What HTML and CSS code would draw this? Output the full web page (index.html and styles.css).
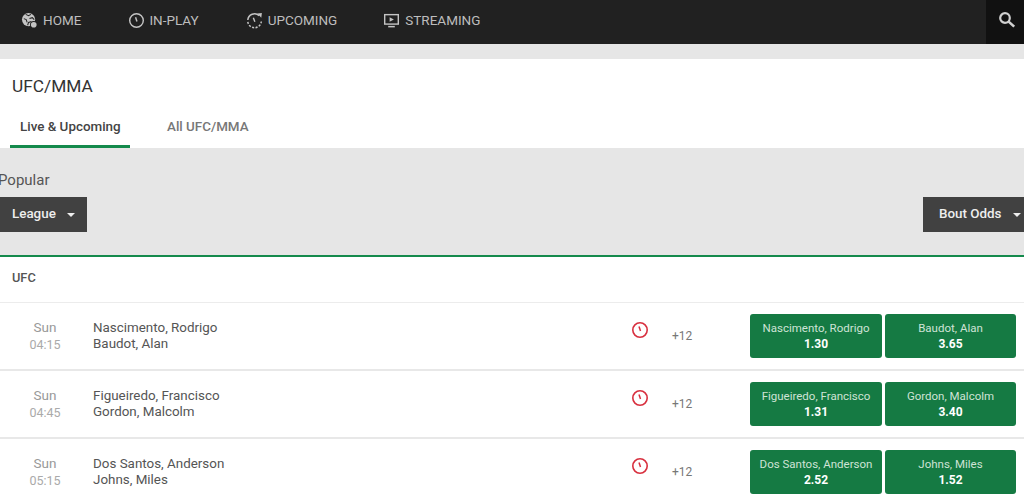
FILE: index.html
```html
<!DOCTYPE html>
<html lang="en">
<head>
<meta charset="utf-8">
<title>UFC/MMA</title>
<link rel="stylesheet" href="styles.css">
</head>
<body>
<header class="topbar">
  <nav class="nav">
    <a class="nav-item nav-home">
      <svg class="nav-icon" viewBox="0 0 18 18"><circle cx="8" cy="8" r="7" fill="#c4c4c4"/><path d="M5 2.5l3 1.5 2.5-1.5M3 7l2.5 1 1 3M9 7l3-1 2 2M7 14l1-3 3-1" stroke="#222" stroke-width="1.1" fill="none"/><circle cx="13.5" cy="13.5" r="4" fill="#222"/><circle cx="13.5" cy="13.5" r="3" fill="#c4c4c4"/></svg>
      HOME
    </a>
    <a class="nav-item nav-play">
      <svg class="nav-icon" viewBox="0 0 18 18"><circle cx="9" cy="9" r="7.2" fill="none" stroke="#c4c4c4" stroke-width="1.5"/><path d="M8 5.5l1.5 4.5" stroke="#c4c4c4" stroke-width="1.5" fill="none"/></svg>
      IN-PLAY
    </a>
    <a class="nav-item nav-up">
      <svg class="nav-icon" viewBox="0 0 18 18"><path d="M1.9 8.5A7.2 7.2 0 0 1 14 3.8" fill="none" stroke="#c4c4c4" stroke-width="1.6"/><path d="M1.9 10.5A7.2 7.2 0 0 0 16.2 10" fill="none" stroke="#c4c4c4" stroke-width="1.6" stroke-dasharray="2.2 1.5"/><path d="M12 1.5l4.8-.5-.6 5z" fill="#c4c4c4"/><path d="M7.8 6l1.6 4.2" stroke="#c4c4c4" stroke-width="1.5" fill="none"/></svg>
      UPCOMING
    </a>
    <a class="nav-item">
      <svg class="nav-icon" viewBox="0 0 18 18"><rect x="1.8" y="2.8" width="14.4" height="10" fill="none" stroke="#c4c4c4" stroke-width="1.5"/><path d="M7 5.5l4.5 2.4L7 10.3z" fill="#c4c4c4"/><path d="M5.5 15.5h7" stroke="#c4c4c4" stroke-width="1.6"/></svg>
      STREAMING
    </a>
  </nav>
  <button class="search" aria-label="Search">
    <svg viewBox="0 0 18 18" width="18" height="18"><circle cx="7" cy="7" r="4.8" fill="none" stroke="#d0d0d0" stroke-width="2.2"/><path d="M10.6 10.6l5.6 5" stroke="#d0d0d0" stroke-width="2.6"/></svg>
  </button>
</header>
<div class="strip"></div>
<section class="head">
  <h1 class="title">UFC/MMA</h1>
  <div class="tabs">
    <a class="tab tab-active">Live &amp; Upcoming</a>
    <a class="tab">All UFC/MMA</a>
  </div>
</section>
<section class="filters">
  <div class="filters-label">Popular</div>
  <div class="filters-row">
    <button class="drop drop-league">League<span class="caret"></span></button>
    <button class="drop drop-odds">Bout Odds<span class="caret"></span></button>
  </div>
</section>
<section class="league">UFC</section>
<main>
  <article class="bout">
    <div class="when"><div class="day">Sun</div><div class="time">04:15</div></div>
    <div class="names"><div>Nascimento, Rodrigo</div><div>Baudot, Alan</div></div>
    <svg class="clock" viewBox="0 0 18 18"><circle cx="9" cy="9" r="7.2" fill="none" stroke="#d8303f" stroke-width="1.6"/><path d="M8 5.5l1.5 4.5" stroke="#d8303f" stroke-width="1.5" fill="none"/></svg>
    <div class="more">+12</div>
    <div class="odds">
      <a class="odd odd-l"><span>Nascimento, Rodrigo</span><b>1.30</b></a>
      <a class="odd odd-r"><span>Baudot, Alan</span><b>3.65</b></a>
    </div>
  </article>
  <article class="bout">
    <div class="when"><div class="day">Sun</div><div class="time">04:45</div></div>
    <div class="names"><div>Figueiredo, Francisco</div><div>Gordon, Malcolm</div></div>
    <svg class="clock" viewBox="0 0 18 18"><circle cx="9" cy="9" r="7.2" fill="none" stroke="#d8303f" stroke-width="1.6"/><path d="M8 5.5l1.5 4.5" stroke="#d8303f" stroke-width="1.5" fill="none"/></svg>
    <div class="more">+12</div>
    <div class="odds">
      <a class="odd odd-l"><span>Figueiredo, Francisco</span><b>1.31</b></a>
      <a class="odd odd-r"><span>Gordon, Malcolm</span><b>3.40</b></a>
    </div>
  </article>
  <article class="bout">
    <div class="when"><div class="day">Sun</div><div class="time">05:15</div></div>
    <div class="names"><div>Dos Santos, Anderson</div><div>Johns, Miles</div></div>
    <svg class="clock" viewBox="0 0 18 18"><circle cx="9" cy="9" r="7.2" fill="none" stroke="#d8303f" stroke-width="1.6"/><path d="M8 5.5l1.5 4.5" stroke="#d8303f" stroke-width="1.5" fill="none"/></svg>
    <div class="more">+12</div>
    <div class="odds">
      <a class="odd odd-l"><span>Dos Santos, Anderson</span><b>2.52</b></a>
      <a class="odd odd-r"><span>Johns, Miles</span><b>1.52</b></a>
    </div>
  </article>
</main>
</body>
</html>
```
FILE: styles.css
```css
* { box-sizing: border-box; }
html, body { margin: 0; height: 499px; overflow: hidden; }
body { font-family: Roboto, "Liberation Sans", sans-serif; background: #fff; color: #444; }

.topbar { height: 44px; background: #212121; display: flex; justify-content: space-between; }
.nav { display: flex; padding-left: 21px; }
.nav-item { display: flex; align-items: center; gap: 5px; height: 40px; color: #bdbdbd; font-size: 13.5px; margin-right: 47px; }
.nav-item.nav-play { gap: 4px; margin-right: 47px; }
.nav-item.nav-up { margin-right: 46px; }
.nav-icon { width: 17px; height: 17px; flex: none; }
.search { width: 38px; height: 44px; background: #111; border: 0; padding: 0 0 4px 3px; display: flex; align-items: center; justify-content: center; }

.strip { height: 15px; background: #e6e6e6; }

.head { height: 89px; background: #fff; }
.title { margin: 0; padding: 17px 0 0 12px; font-size: 17.3px; font-weight: 400; line-height: 20px; color: #333; }
.tabs { display: flex; padding: 0 0 0 10px; margin-top: 13px; }
.tab { height: 39px; padding-top: 10px; line-height: 16px; font-size: 13.4px; font-weight: 500; color: #777; margin-right: 37px; width: 82px; white-space: nowrap; }
.tab-active { width: 120px; padding-left: 10px; color: #444; border-bottom: 3px solid #148a4c; }

.filters { height: 109px; background: #e6e6e6; border-bottom: 2px solid #148a4c; padding-top: 23px; }
.filters-label { font-size: 15px; line-height: 18px; color: #555; margin-left: -2px; }
.filters-row { display: flex; justify-content: space-between; margin-top: 8px; }
.drop { height: 35px; background: #414141; border: 0; color: #eee; font: 500 13.4px Roboto, "Liberation Sans", sans-serif; display: flex; align-items: center; padding: 0 0 2px; }
.drop-league { width: 87px; padding-left: 12px; }
.drop-odds { width: 101px; padding-left: 16px; }
.caret { width: 0; height: 0; margin: 2px 0 0 11px; border-left: 4px solid transparent; border-right: 4px solid transparent; border-top: 4px solid #eee; }

.league { height: 46px; padding: 13px 0 0 12px; font-size: 12.8px; font-weight: 500; line-height: 16px; color: #555; border-bottom: 1px solid #ececec; }

.bout { height: 68px; display: flex; align-items: flex-start; border-bottom: 2px solid #e8e8e8; }
.when { width: 90px; text-align: center; padding-top: 16px; }
.day { font-size: 13.5px; line-height: 17px; color: #999; }
.time { font-size: 12.5px; line-height: 17px; color: #aaa; }
.names { width: 538px; margin-left: 3px; padding-top: 17px; font-size: 13.4px; line-height: 16px; color: #555; }
.clock { width: 18px; height: 18px; margin-top: 18px; flex: none; }
.more { margin: 25px 0 0 23px; width: 78px; font-size: 12px; line-height: 16px; color: #777; }
.odds { display: flex; gap: 3px; margin-top: 11px; }
.odd { height: 44px; background: #157a43; border-radius: 3px; display: flex; flex-direction: column; align-items: center; justify-content: center; font-size: 11.5px; line-height: 16px; color: #cfe3d6; }
.odd b { color: #fff; font-size: 12px; font-weight: 700; }
.odd-l { width: 132px; }
.odd-r { width: 131px; }
```
